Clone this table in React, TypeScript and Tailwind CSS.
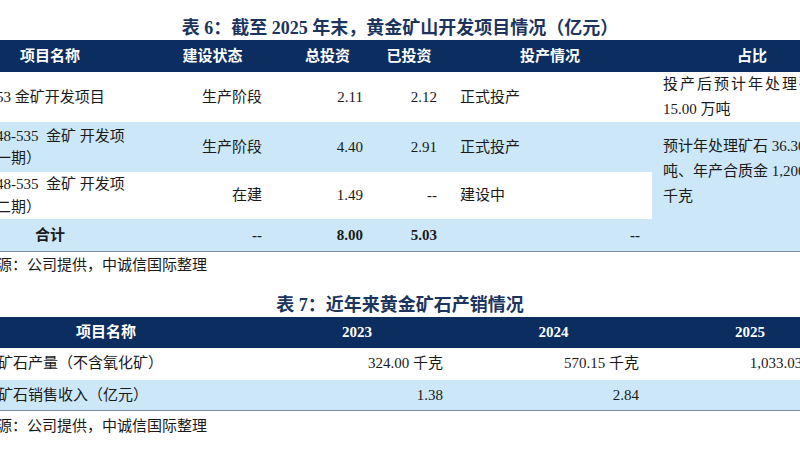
import React from "react";

const navy = "bg-[#0b2d60]";

export default function App() {
  return (
    <div className="w-[800px] h-[450px] overflow-hidden bg-white text-[#1a1a1a] font-['Liberation_Serif','Noto_Sans_CJK_SC',serif] text-[15px]">
      {/* 表 6 */}
      <div className="pt-[16px]">
        <div className="h-[24px] leading-[24px] text-center text-[18px] font-bold text-[#1c355e]">
          表 6：截至 2025 年末，黄金矿山开发项目情况（亿元）
        </div>
        <div className="w-[800px] overflow-hidden">
          <table className="table-fixed border-collapse ml-[-40px] w-[892px]">
            <colgroup>
              <col className="w-[180px]" />
              <col className="w-[145px]" />
              <col className="w-[85px]" />
              <col className="w-[78px]" />
              <col className="w-[204px]" />
              <col className="w-[200px]" />
            </colgroup>
            <thead>
              <tr className={`h-[32px] ${navy} text-white font-bold`}>
                <th className="p-0 text-center font-bold">项目名称</th>
                <th className="p-0 text-center font-bold">建设状态</th>
                <th className="p-0 text-center font-bold">总投资</th>
                <th className="p-0 text-center font-bold">已投资</th>
                <th className="p-0 text-center font-bold">投产情况</th>
                <th className="p-0 text-center font-bold">占比</th>
              </tr>
            </thead>
            <tbody>
              <tr className="h-[50px] bg-white">
                <td className="p-0 pl-[36px] whitespace-nowrap">53 金矿开发项目</td>
                <td className="p-0 pr-[23px] text-right">生产阶段</td>
                <td className="p-0 pr-[7px] text-right">2.11</td>
                <td className="p-0 pr-[11px] text-right">2.12</td>
                <td className="p-0 pl-[12px]">正式投产</td>
                <td className="p-0 pl-[11px] leading-[25px] whitespace-nowrap">
                  <div className="tracking-[2px]">投产后预计年处理矿石</div>
                  <div>15.00 万吨</div>
                </td>
              </tr>
              <tr className="h-[50px] bg-[#cce8f8]">
                <td className="p-0 pl-[36px] leading-[22px] whitespace-pre">
                  <div>48-535  金矿 开发项</div>
                  <div>一期）</div>
                </td>
                <td className="p-0 pr-[23px] text-right">生产阶段</td>
                <td className="p-0 pr-[7px] text-right">4.40</td>
                <td className="p-0 pr-[11px] text-right">2.91</td>
                <td className="p-0 pl-[12px]">正式投产</td>
                <td rowSpan={2} className="p-0 pl-[11px] pt-[2px] leading-[25px] whitespace-nowrap bg-[#cce8f8]">
                  <div>预计年处理矿石 36.30 万</div>
                  <div>吨、年产合质金 1,200.00</div>
                  <div>千克</div>
                </td>
              </tr>
              <tr className="h-[47px] bg-white">
                <td className="p-0 pl-[36px] leading-[23px] whitespace-pre">
                  <div>48-535  金矿 开发项</div>
                  <div>二期）</div>
                </td>
                <td className="p-0 pr-[23px] text-right">在建</td>
                <td className="p-0 pr-[7px] text-right">1.49</td>
                <td className="p-0 pr-[11px] text-right">--</td>
                <td className="p-0 pl-[12px]">建设中</td>
              </tr>
              <tr className="h-[32px] bg-[#cce8f8] font-bold border-b border-[#7f8c99]">
                <td className="p-0 text-center">合计</td>
                <td className="p-0 pr-[23px] text-right">--</td>
                <td className="p-0 pr-[7px] text-right">8.00</td>
                <td className="p-0 pr-[11px] text-right">5.03</td>
                <td className="p-0 pr-[12px] text-right">--</td>
                <td className="p-0"></td>
              </tr>
            </tbody>
          </table>
        </div>
        <div className="mt-[3px] ml-[-3px] h-[20px] leading-[20px] whitespace-nowrap">
          源：公司提供，中诚信国际整理
        </div>
      </div>

      {/* 表 7 */}
      <div className="mt-[18px]">
        <div className="h-[24px] leading-[24px] text-center text-[18px] font-bold text-[#1c355e]">
          表 7：近年来黄金矿石产销情况
        </div>
        <div className="w-[800px] overflow-hidden">
          <table className="table-fixed border-collapse ml-[-47px] w-[895px]">
            <colgroup>
              <col className="w-[306px]" />
              <col className="w-[196px]" />
              <col className="w-[197px]" />
              <col className="w-[196px]" />
            </colgroup>
            <thead>
              <tr className={`h-[31px] ${navy} text-white`}>
                <th className="p-0 text-center font-bold">项目名称</th>
                <th className="p-0 text-center font-bold">2023</th>
                <th className="p-0 text-center font-bold">2024</th>
                <th className="p-0 text-center font-bold">2025</th>
              </tr>
            </thead>
            <tbody>
              <tr className="h-[32px] bg-white">
                <td className="p-0 pl-[45px] whitespace-nowrap">矿石产量（不含氧化矿）</td>
                <td className="p-0 pr-[12px] text-right">324.00 千克</td>
                <td className="p-0 pr-[13px] text-right">570.15 千克</td>
                <td className="p-0 pr-[12px] text-right whitespace-nowrap">1,033.03 千克</td>
              </tr>
              <tr className="h-[31px] bg-[#cce8f8] border-b border-[#7f8c99]">
                <td className="p-0 pl-[45px] whitespace-nowrap">矿石销售收入（亿元）</td>
                <td className="p-0 pr-[12px] text-right">1.38</td>
                <td className="p-0 pr-[13px] text-right">2.84</td>
                <td className="p-0 pr-[12px] text-right"></td>
              </tr>
            </tbody>
          </table>
        </div>
        <div className="mt-[5px] ml-[-3px] h-[20px] leading-[20px] whitespace-nowrap">
          源：公司提供，中诚信国际整理
        </div>
      </div>
    </div>
  );
}
